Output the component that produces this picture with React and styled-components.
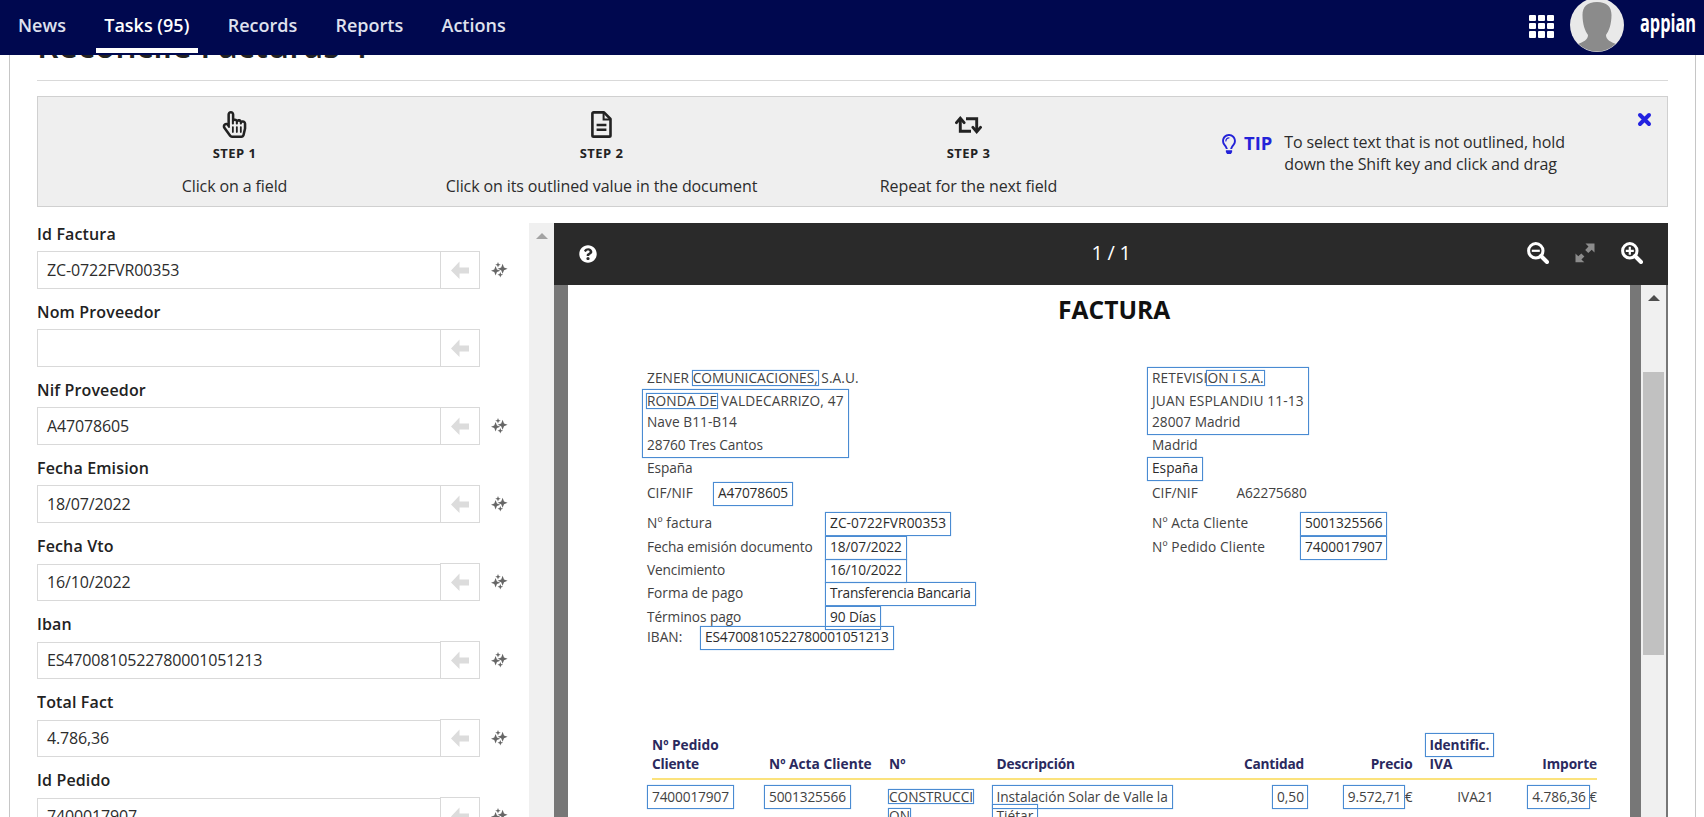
import React from 'react'
import styled, {createGlobalStyle} from 'styled-components'
import {FaRegHandPointer, FaRegLightbulb, FaQuestionCircle} from 'react-icons/fa'


const GlobalStyle = createGlobalStyle`
    * {
        box-sizing: border-box;
    }
    body {
        margin: 0;
        overflow: hidden;
        background: #fff;
        color: #222;
        font-family: "Open Sans", "Noto Sans", sans-serif;
        font-size: 16px;
    }
`

const Page = styled.div`
    height: 100vh;
    display: flex;
    flex-direction: column;
    overflow: hidden;
`

/* ---------- header ---------- */

const Header = styled.header`
    position: relative;
    z-index: 2;
    flex: none;
    height: 55px;
    display: flex;
    justify-content: space-between;
    padding: 0 7px 0 9.5px;
    background: #00084f;
`
const Nav = styled.nav`
    display: flex;
    gap: 21.3px;
`
const NavItem = styled.a`
    position: relative;
    padding: 0 8.5px;
    font-size: 18px;
    font-weight: 600;
    line-height: 50px;
    color: ${({$active}) => ($active ? '#fff' : '#dfe1ee')};

    &::after {
        content: '';
        display: ${({$active}) => ($active ? 'block' : 'none')};
        position: absolute;
        left: 0;
        right: 0;
        top: 48px;
        height: 5px;
        background: #fff;
    }
`
const HeaderTools = styled.div`
    display: flex;
    align-items: flex-start;
`
const AppGrid = styled.div`
    display: grid;
    grid-template-columns: repeat(3, 7px);
    grid-auto-rows: 6.4px;
    gap: 1.7px 2px;
    margin: 15px 16px 0 0;

    span {
        background: #fff;
        border-radius: 1px;
    }
`
const Avatar = styled.svg`
    width: 54px;
    height: 54px;
    margin: -2px 15px 0 0;
`
const Logo = styled.svg`
    width: 58px;
    height: 40px;
    margin-top: 4px;
    fill: #fff;
    font-family: "Open Sans", sans-serif;
    font-size: 25px;
    font-weight: 700;
`

/* ---------- page body ---------- */

const Card = styled.main`
    flex: 1;
    min-height: 0;
    display: flex;
    flex-direction: column;
    margin: 0 8px 0 9px;
    padding: 0 27px;
    border: solid #c6c6c6;
    border-width: 0 1px;
`
const Title = styled.h1`
    margin: -30px 0 15px;
    padding-bottom: 15px;
    border-bottom: 1px solid #d9d9d9;
    font-size: 33.7px;
    font-weight: 600;
    line-height: 40px;
`
const Steps = styled.section`
    flex: none;
    display: flex;
    height: 111px;
    padding-left: 13px;
    background: #efefef;
    border: 1px solid #d0d0d0;
`
const Step = styled.div`
    width: 367px;
    display: flex;
    flex-direction: column;
    align-items: center;
    padding-top: 14px;
`
const StepIcon = styled.div`
    height: 27px;
    display: flex;
    align-items: center;
`
const StepName = styled.div`
    margin-top: 5px;
    font-size: 13px;
    font-weight: 700;
    line-height: 20px;
    letter-spacing: 0.45px;
`
const StepText = styled.div`
    margin-top: 12px;
    line-height: 22px;
    letter-spacing: -0.11px;
    color: #2c2c2c;
`
const Tip = styled.div`
    flex: 1;
    display: flex;
    padding: 34px 0 0 67px;
    color: #2322d8;

    svg {
        margin-top: 3px;
    }
`
const TipName = styled.div`
    margin-left: 5px;
    font-size: 18.4px;
    font-weight: 700;
    line-height: 24px;
`
const TipText = styled.p`
    width: 300px;
    margin: 0 0 0 12px;
    line-height: 22px;
    letter-spacing: -0.12px;
    color: #2c2c2c;
`
const Close = styled.svg`
    width: 15px;
    height: 15px;
    margin: 15px 15px 0 0;
    stroke: #2322e0;
    stroke-width: 4;
    stroke-linecap: round;
`

const Columns = styled.div`
    flex: 1;
    min-height: 0;
    display: flex;
    margin-top: 16px;
`

/* ---------- form ---------- */

const Form = styled.form`
    width: 492px;
    overflow: hidden;
`
const Field = styled.div`
    height: 78px;
`
const Label = styled.label`
    display: block;
    margin-bottom: 6px;
    font-weight: 600;
    line-height: 22px;
    letter-spacing: 0.14px;
`
const FieldRow = styled.div`
    display: flex;
    align-items: flex-end;
    height: 38px;
`
const Value = styled.div`
    width: 403px;
    height: ${({$low}) => ($low ? '37px' : '38px')};
    padding-left: 9px;
    border: 1px solid #d9d9d9;
    border-right: none;
    line-height: ${({$low}) => ($low ? '35px' : '36px')};
    letter-spacing: -0.15px;
    color: #2c2c2c;
`
const Pick = styled.button`
    width: 40px;
    height: 38px;
    padding: 0;
    border: 1px solid #d9d9d9;
    background: #fff;
    display: flex;
    align-items: center;
    justify-content: center;
    fill: #dcdcdc;
`
const Sparkles = styled.svg`
    width: 17px;
    height: 16px;
    margin: 0 0 11px 11px;
    fill: #666;
`

const Scrollbar = styled.div`
    flex: none;
    width: 25px;
    display: flex;
    flex-direction: column;
    align-items: center;
    padding-top: 10px;
    background: #f0f0f0;
`
const ScrollUp = styled.div`
    border: solid transparent;
    border-width: 0 6px 6px;
    border-bottom-color: ${({$color}) => $color};
`
const Thumb = styled.div`
    width: 21px;
    height: 283px;
    margin-top: 71px;
    background: #c1c1c1;
`

/* ---------- viewer ---------- */

const Viewer = styled.section`
    flex: 1;
    display: flex;
    flex-direction: column;
    background: #777;
`
const Toolbar = styled.div`
    flex: none;
    height: 62px;
    display: grid;
    grid-template-columns: 1fr auto 1fr;
    align-items: center;
    padding: 0 25px;
    background: #2a2a2a;
    color: #fff;
`
const PageCount = styled.div`
    padding-bottom: 2px;
    font-size: 20px;
    line-height: 28px;
    letter-spacing: -0.3px;
`
const ZoomTools = styled.div`
    display: flex;
    justify-content: flex-end;
    padding-bottom: 3px;

    svg {
        width: 22px;
        height: 22px;
        margin-left: 25px;
    }
`
const Scroller = styled.div`
    flex: 1;
    min-height: 0;
    display: flex;
    justify-content: space-between;
    padding: 0 2px 0 14px;
    overflow: hidden;
`
const Sheet = styled.article`
    width: 1062px;
    padding: 8px 0 0 79px;
    background: #fff;
    color: #424242;
    font-size: 13.7px;
    line-height: 20px;
    white-space: nowrap;
`
const SheetTitle = styled.h2`
    margin: 0 0 41px 411px;
    font-size: 24.6px;
    font-weight: 700;
    line-height: 34px;
    color: #111;
`
const Parties = styled.div`
    display: flex;
    height: 279px;
`
const Party = styled.div`
    flex: none;
    width: 505px;
`
const Line = styled.div`
    display: flex;
    padding-top: ${({$gap}) => $gap || 0}px;
`
const Name = styled.div`
    flex: none;
    width: ${({$w}) => $w}px;
`
const Text = styled.span`
    letter-spacing: ${({$ls}) => $ls || 0}px;
`
// text the reader can pick, framed in blue
const Mark = styled(Text)`
    position: relative;
    color: ${({$tight}) => ($tight ? 'inherit' : '#2c2c2c')};

    &::after {
        content: '';
        position: absolute;
        inset: ${({$tight}) => ($tight ? '2px -1px 1px' : '-1px -5px -3px')};
        border: 1px solid #4a8bd2;
        box-shadow: 0 0 1px #8fbbea;
    }
`
const MarkBlock = styled.div`
    position: relative;
    width: fit-content;

    &::after {
        content: '';
        position: absolute;
        inset: ${({$top}) => $top}px -5px -3px;
        border: 1px solid #4a8bd2;
        box-shadow: 0 0 1px #8fbbea;
    }
`

const Table = styled.div`
    width: 945px;
    margin: 88px 0 0 5px;
    line-height: 19px;
`
const TableRow = styled.div`
    display: grid;
    grid-template-columns: 117px 120px 107.5px 204.5px 103px 108.5px 81px 103.5px;
    padding-top: 7px;
`
const TableHead = styled(TableRow)`
    align-items: end;
    padding: 0 0 5px;
    border-bottom: 2px solid #fbe27c;
    font-weight: 700;
    color: #2a295e;
`
const Cell = styled.div`
    text-align: ${({$right}) => ($right ? 'right' : 'left')};
    padding-left: ${({$pad}) => $pad || 0}px;
`
const CellMark = styled(Mark)`
    display: inline-block;
    color: inherit;

    &::after {
        inset: ${({$tight, $end}) => ($tight ? '2px -1px 2px' : `-2px ${$end || -5}px -3px -5px`)};
    }
`


const fields = [
  ['Id Factura', 'ZC-0722FVR00353'],
  ['Nom Proveedor', ''],
  ['Nif Proveedor', 'A47078605'],
  ['Fecha Emision', '18/07/2022'],
  ['Fecha Vto', '16/10/2022'],
  ['Iban', 'ES4700810522780001051213'],
  ['Total Fact', '4.786,36'],
  ['Id Pedido', '7400017907'],
]

// label, label spacing, value, value spacing, gap above
const details = [
  ['Nº factura', 0.1, 'ZC-0722FVR00353', 0.08, 10],
  ['Fecha emisión documento', -0.11, '18/07/2022', -0.08, 4],
  ['Vencimiento', -0.13, '16/10/2022', -0.08, 3],
  ['Forma de pago', 0.02, 'Transferencia Bancaria', -0.27, 3],
  ['Términos pago', -0.08, '90 Días', -0.1, 4],
]

const star = (x, y, r) => {
  const k = r * 0.28
  return `M${x} ${y - r}L${x + k} ${y - k}L${x + r} ${y}L${x + k} ${y + k}L${x} ${y + r}L${x - k} ${y + k}L${x - r} ${y}L${x - k} ${y - k}Z`
}

const SparkleIcon = () => (
  <Sparkles viewBox="0 0 17 16">
    <path d={star(4.6, 8.8, 4.7)} />
    <path d={star(11.6, 6.8, 5)} />
    <path d={star(7, 2.8, 2.7)} />
    <path d={star(9.3, 12.8, 2.8)} />
  </Sparkles>
)

const FileIcon = () => (
  <svg width="21" height="27" viewBox="0 0 21 27" fill="none" stroke="#222" strokeWidth="2.6">
    <path d="M2.6 1.4H13L19.5 8V24.4a1.2 1.2 0 0 1-1.2 1.2H2.6a1.2 1.2 0 0 1-1.2-1.2V2.6a1.2 1.2 0 0 1 1.2-1.2Z" strokeLinejoin="round" />
    <path d="M12.6 1.6V8.6H19.4" strokeWidth="2" />
    <path d="M5.6 14H15.4M5.6 18.8H15.4" strokeWidth="2.4" />
  </svg>
)

const RepeatIcon = () => (
  <svg width="27" height="18" viewBox="0 0 27 18" fill="none" stroke="#222" strokeWidth="2.9">
    <path d="M5.3 2.5V15.2H16" />
    <path d="M1.500 6.6L5.3 2.2L9.1 6.6" strokeLinecap="round" />
    <path d="M11 2.8H21.7V15.5" />
    <path d="M17.9 11.4L21.7 15.8L25.500 11.4" strokeLinecap="round" />
  </svg>
)

const ZoomIcon = ({plus}) => (
  <svg viewBox="0 0 22 22" fill="none" stroke="#fff">
    <circle cx="8.8" cy="8.8" r="7.2" strokeWidth="3" />
    <path d="M14 14L20 20" strokeWidth="4" strokeLinecap="round" />
    <path d={plus ? 'M4.8 8.8H12.8M8.8 4.8V12.8' : 'M4.8 8.8H12.8'} strokeWidth="2.2" />
  </svg>
)

const FitIcon = () => (
  <svg viewBox="0 0 22 22" fill="#8c8c8c">
    <path d="M11.500 1.500H20.500V10.500L17.700 7.700L14.300 11L11.200 7.900L14.500 4.600Z" />
    <path d="M1.500 11.500L4.300 14.300L7.300 11.400L10.400 14.500L7.400 17.500L10.300 20.300H1.500Z" />
  </svg>
)

const App = () => {
    return (
        <>
        <GlobalStyle />
        <Page>
            <Header>
                <Nav>
                    <NavItem>News</NavItem>
                    <NavItem $active>Tasks (95)</NavItem>
                    <NavItem>Records</NavItem>
                    <NavItem>Reports</NavItem>
                    <NavItem>Actions</NavItem>
                </Nav>
                <HeaderTools>
                    <AppGrid>
                        {[...Array(9)].map((_, i) => <span key={i} />)}
                    </AppGrid>
                    <Avatar viewBox="0 0 54 54">
                        <defs>
                            <clipPath id="face"><circle cx="27" cy="27" r="26.5" /></clipPath>
                        </defs>
                        <circle cx="27" cy="27" r="27" fill="#e9e9e9" />
                        <g clipPath="url(#face)" fill="#8b8b8b">
                            <path d="M27 4C17 4 12.500 9 12.500 17C12.500 26 15 33 18 37C18 42 13 44 8 46V56H46V46C41 44 36 42 36 37C39 33 41.500 26 41.500 17C41.500 9 37 4 27 4Z" />
                        </g>
                    </Avatar>
                    <Logo viewBox="0 0 58 40">
                        <text x="1" y="28" textLength="56" lengthAdjust="spacingAndGlyphs">appian</text>
                    </Logo>
                </HeaderTools>
            </Header>
            <Card>
                <Title>Reconcile Facturas 4</Title>
                <Steps>
                    <Step>
                        <StepIcon><FaRegHandPointer size={27} /></StepIcon>
                        <StepName>STEP 1</StepName>
                        <StepText>Click on a field</StepText>
                    </Step>
                    <Step>
                        <StepIcon><FileIcon /></StepIcon>
                        <StepName>STEP 2</StepName>
                        <StepText>Click on its outlined value in the document</StepText>
                    </Step>
                    <Step>
                        <StepIcon><RepeatIcon /></StepIcon>
                        <StepName>STEP 3</StepName>
                        <StepText>Repeat for the next field</StepText>
                    </Step>
                    <Tip>
                        <FaRegLightbulb size={20} />
                        <TipName>TIP</TipName>
                        <TipText>To select text that is not outlined, hold<br />down the Shift key and click and drag</TipText>
                    </Tip>
                    <Close viewBox="0 0 15 15">
                        <path d="M3 3L12 12M12 3L3 12" />
                    </Close>
                </Steps>
                <Columns>
                    <Form>
                        {fields.map(([label, value], i) => (
                            <Field key={label}>
                                <Label>{label}</Label>
                                <FieldRow>
                                    <Value $low={i > 3}>{value}</Value>
                                    <Pick type="button">
                                        <svg width="18" height="18" viewBox="0 0 18 18">
                                            <path d="M0 9.500L8.500 0.500V6.500H18V12.500H8.500V18Z" />
                                        </svg>
                                    </Pick>
                                    {value && <SparkleIcon />}
                                </FieldRow>
                            </Field>
                        ))}
                    </Form>
                    <Scrollbar>
                        <ScrollUp $color="#a3a3a3" />
                    </Scrollbar>
                    <Viewer>
                        <Toolbar>
                            <FaQuestionCircle size={18} />
                            <PageCount>1 / 1</PageCount>
                            <ZoomTools>
                                <ZoomIcon />
                                <FitIcon />
                                <ZoomIcon plus />
                            </ZoomTools>
                        </Toolbar>
                        <Scroller>
                            <Sheet>
                                <SheetTitle>FACTURA</SheetTitle>
                                <Parties>
                                    <Party>
                                        <Line>
                                            <Text $ls={0.06}>ZENER <Mark $tight $ls={0}>COMUNICACIONES,</Mark> S.A.U.</Text>
                                        </Line>
                                        <MarkBlock $top={1}>
                                            <Line $gap={3}><Text $ls={0.13}><Mark $tight $ls={0.13}>RONDA DE</Mark> VALDECARRIZO, 47</Text></Line>
                                            <Line $gap={1}><Text $ls={0.05}>Nave B11-B14</Text></Line>
                                            <Line $gap={3}><Text $ls={-0.12}>28760 Tres Cantos</Text></Line>
                                        </MarkBlock>
                                        <Line $gap={3}><Text $ls={-0.08}>España</Text></Line>
                                        <Line $gap={5}>
                                            <Name $w={71}>CIF/NIF</Name>
                                            <Mark $ls={-0.14}>A47078605</Mark>
                                        </Line>
                                        {details.map(([label, ls, value, vls, gap]) => (
                                            <Line key={label} $gap={gap}>
                                                <Name $w={183}><Text $ls={ls}>{label}</Text></Name>
                                                <Mark $ls={vls}>{value}</Mark>
                                            </Line>
                                        ))}
                                        <Line>
                                            <Name $w={58}>IBAN:</Name>
                                            <Mark $ls={-0.15}>ES4700810522780001051213</Mark>
                                        </Line>
                                    </Party>
                                    <Party>
                                        <MarkBlock $top={-1}>
                                            <Line><Text $ls={0.11}>RETEVISI<Mark $tight $ls={0.11}>ON I S.A.</Mark></Text></Line>
                                            <Line $gap={3}><Text $ls={0.16}>JUAN ESPLANDIU 11-13</Text></Line>
                                            <Line $gap={1}><Text $ls={0}>28007 Madrid</Text></Line>
                                        </MarkBlock>
                                        <Line $gap={3}><Text>Madrid</Text></Line>
                                        <Line $gap={3}><Mark>España</Mark></Line>
                                        <Line $gap={5}>
                                            <Name $w={84.5}>CIF/NIF</Name>
                                            <Text $ls={-0.12}>A62275680</Text>
                                        </Line>
                                        <Line $gap={10}>
                                            <Name $w={153}><Text $ls={0.12}>Nº Acta Cliente</Text></Name>
                                            <Mark $ls={-0.08}>5001325566</Mark>
                                        </Line>
                                        <Line $gap={4}>
                                            <Name $w={153}><Text $ls={0.12}>Nº Pedido Cliente</Text></Name>
                                            <Mark $ls={-0.08}>7400017907</Mark>
                                        </Line>
                                    </Party>
                                </Parties>
                                <Table>
                                    <TableHead>
                                        <Cell>Nº Pedido<br /><Text $ls={-0.2}>Cliente</Text></Cell>
                                        <Cell><Text $ls={0.02}>Nº Acta Cliente</Text></Cell>
                                        <Cell>Nº</Cell>
                                        <Cell><Text $ls={-0.12}>Descripción</Text></Cell>
                                        <Cell $right><Text $ls={-0.2}>Cantidad</Text></Cell>
                                        <Cell $right><Text $ls={-0.12}>Precio</Text></Cell>
                                        <Cell $pad={17}><CellMark $ls={-0.1}>Identific.</CellMark><br />IVA</Cell>
                                        <Cell $right><Text $ls={-0.1}>Importe</Text></Cell>
                                    </TableHead>
                                    <TableRow>
                                        <Cell><CellMark $ls={-0.14}>7400017907</CellMark></Cell>
                                        <Cell><CellMark $ls={-0.14}>5001325566</CellMark></Cell>
                                        <Cell><CellMark $tight>CONSTRUCCI</CellMark><br /><CellMark $tight>ON</CellMark></Cell>
                                        <Cell><CellMark $ls={-0.06}>Instalación Solar de Valle la</CellMark><br /><CellMark>Tiétar</CellMark></Cell>
                                        <Cell $right><CellMark $end={-4}>0,50</CellMark></Cell>
                                        <Cell $right><CellMark $ls={-0.1} $end={-4}>9.572,71</CellMark> €</Cell>
                                        <Cell $right>IVA21</Cell>
                                        <Cell $right><CellMark $ls={-0.1} $end={-4}>4.786,36</CellMark> €</Cell>
                                    </TableRow>
                                </Table>
                            </Sheet>
                            <Scrollbar>
                                <ScrollUp $color="#4d4d4d" />
                                <Thumb />
                            </Scrollbar>
                        </Scroller>
                    </Viewer>
                </Columns>
            </Card>
        </Page>
        </>
    )
}

export default App
